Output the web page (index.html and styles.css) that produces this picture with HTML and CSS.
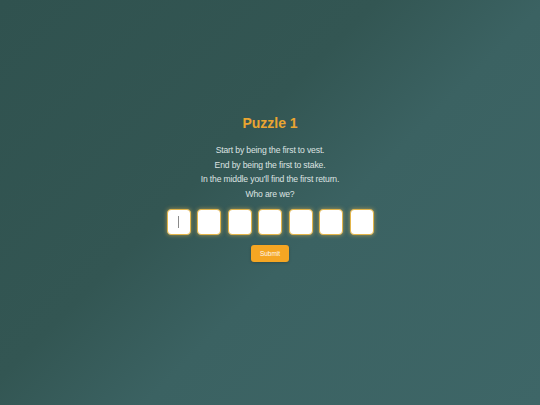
FILE: index.html
```html
<!DOCTYPE html>
<html>
<head>
<meta charset="utf-8">
<link rel="stylesheet" href="styles.css">
</head>
<body>
<main class="puzzle">
  <h1 class="title">Puzzle 1</h1>
  <div class="riddle">
    <p>Start by being the first to vest.</p>
    <p>End by being the first to stake.</p>
    <p>In the middle you'll find the first return.</p>
    <p>Who are we?</p>
  </div>
  <div class="boxes">
    <label class="slot">
      <input class="box" maxlength="1">
      <span class="caret"></span>
    </label>
    <input class="box" maxlength="1">
    <input class="box" maxlength="1">
    <input class="box" maxlength="1">
    <input class="box" maxlength="1">
    <input class="box" maxlength="1">
    <input class="box" maxlength="1">
  </div>
  <button class="submit">Submit</button>
</main>
</body>
</html>
```
FILE: styles.css
```css
html, body {
  margin: 0;
  height: 100%;
}
body {
  background: linear-gradient(135deg, #30524f 0%, #335653 40%, #3b6262 58%, #3e6667 100%);
  font-family: "Liberation Sans", Arial, sans-serif;
  color: #dfe5e4;
}
.puzzle {
  display: flex;
  flex-direction: column;
  align-items: center;
  padding-top: 114px;
}
.title {
  margin: 0;
  font-size: 14px;
  line-height: 18px;
  font-weight: bold;
  color: #eaa531;
}
.riddle {
  margin-top: 11px;
  text-align: center;
  font-size: 8.6px;
  letter-spacing: -0.15px;
  line-height: 14.5px;
  color: #dde3e2;
}
.riddle p {
  margin: 0;
}
.boxes {
  display: flex;
  gap: 6.5px;
  margin-top: 8px;
}
.slot {
  position: relative;
  display: block;
}
.caret {
  position: absolute;
  left: 11.5px;
  top: 7px;
  width: 1px;
  height: 12px;
  background: #8a8a8a;
}
.box {
  display: block;
  box-sizing: border-box;
  width: 24px;
  height: 26px;
  margin: 0;
  padding: 0;
  border: 1.5px solid #e3b54a;
  border-radius: 4px;
  background: #fff;
  box-shadow: 0 0 4px rgba(240, 190, 80, 0.6);
  text-align: center;
  font-family: "Liberation Sans", Arial, sans-serif;
  font-size: 12px;
  outline: none;
}
.submit {
  margin-top: 10px;
  width: 38px;
  height: 17px;
  padding: 0;
  border: none;
  border-radius: 3px;
  background: #f5a623;
  color: #fff8ec;
  font-family: "Liberation Sans", Arial, sans-serif;
  font-size: 6.5px;
  box-shadow: 0 1px 3px rgba(0, 0, 0, 0.2);
}
```
